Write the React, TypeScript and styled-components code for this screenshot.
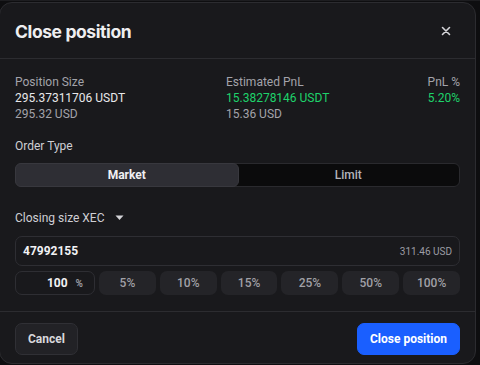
import React from "react";
import styled, { createGlobalStyle } from "styled-components";

const Global = createGlobalStyle`
  html, body { margin: 0; padding: 0; background: #0e0e10; }
  body { font-family: Roboto, "Liberation Sans", sans-serif; width: 480px; height: 365px; overflow: hidden; }
  * { box-sizing: border-box; }
`;

const Backdrop = styled.div`
  width: 480px;
  height: 365px;
  padding-top: 2px;
  background: #0e0e10;
  border-top: 1px solid #1d1d20;
`;

const Modal = styled.div`
  width: 477px;
  height: 362px;
  margin-left: -1px;
  margin-top: -1px;
  background: #19191c;
  border: 1px solid #2c2c30;
  border-radius: 13px;
  display: flex;
  flex-direction: column;
  overflow: hidden;
`;

const Header = styled.div`
  height: 56px;
  flex: none;
  padding: 1px 15px 0 15px;
  display: flex;
  align-items: center;
  justify-content: space-between;
  border-bottom: 1px solid #2c2c30;
`;

const Title = styled.h1`
  margin: 0;
  font-family: Inter, "Liberation Sans", sans-serif;
  font-weight: 700;
  font-size: 17.5px;
  letter-spacing: -0.4px;
  color: #eeeef0;
`;

const CloseBtn = styled.button`
  background: none;
  border: none;
  padding: 0;
  margin-right: 8px;
  width: 12px;
  height: 12px;
  display: flex;
  align-items: center;
  justify-content: center;
`;

const Body = styled.div`
  flex: 1;
  padding: 15px 15px 15px 15px;
  display: flex;
  flex-direction: column;
  border-bottom: 1px solid #2c2c30;
`;

const Stats = styled.div`
  display: grid;
  grid-template-columns: 211px 1fr auto;
`;

const Stat = styled.div<{ $align?: string }>`
  display: flex;
  flex-direction: column;
  align-items: ${(p) => (p.$align === "right" ? "flex-end" : "flex-start")};
`;

const Label = styled.div`
  font-size: 12px;
  line-height: 16px;
  color: #a3a3aa;
`;

const Value = styled.div<{ $tone?: string }>`
  font-size: 12px;
  line-height: 16px;
  font-weight: 400;
  color: ${(p) => (p.$tone === "green" ? "#1ed36b" : "#e8e8ea")};
`;

const Sub = styled.div`
  font-size: 12px;
  line-height: 16px;
  color: #a3a3aa;
`;

const SectionLabel = styled.div<{ $mt: number }>`
  margin-top: ${(p) => p.$mt}px;
  font-size: 12px;
  line-height: 16px;
  color: #cfcfd4;
  display: flex;
  align-items: center;
  gap: 10px;
`;

const Segmented = styled.div`
  margin-top: 9px;
  height: 24px;
  display: grid;
  grid-template-columns: 1fr 1fr;
  background: #0b0b0c;
  border: 1px solid #2a2a2e;
  border-radius: 6px;
`;

const Seg = styled.div<{ $active?: boolean }>`
  display: flex;
  align-items: center;
  justify-content: center;
  margin: -1px;
  border-radius: 6px;
  font-size: 12px;
  font-weight: ${(p) => (p.$active ? 700 : 500)};
  color: ${(p) => (p.$active ? "#f0f0f2" : "#b4b4ba")};
  background: ${(p) => (p.$active ? "#2e2e34" : "transparent")};
  border: 1px solid ${(p) => (p.$active ? "#38383e" : "transparent")};
`;

const AmountBox = styled.div`
  margin-top: 10px;
  height: 30px;
  border: 1px solid #2e2e33;
  border-radius: 7px;
  background: #19191c;
  display: flex;
  align-items: center;
  justify-content: space-between;
  padding: 0 7px 0 7px;
`;

const Amount = styled.span`
  font-size: 12px;
  font-weight: 700;
  color: #f2f2f4;
`;

const AmountUsd = styled.span`
  font-size: 10px;
  color: #9d9da4;
`;

const PctRow = styled.div`
  margin-top: 5px;
  height: 24px;
  display: grid;
  grid-template-columns: 80px repeat(6, 1fr);
  gap: 4px;
`;

const PctInput = styled.div`
  border: 1px solid #2e2e33;
  border-radius: 7px;
  display: flex;
  align-items: center;
  justify-content: flex-end;
  padding-right: 11px;
  gap: 8px;
`;

const PctValue = styled.span`
  font-size: 12px;
  font-weight: 700;
  color: #f2f2f4;
`;

const PctSign = styled.span`
  font-size: 10px;
  font-weight: 700;
  color: #9a9aa0;
`;

const Chip = styled.button`
  border: none;
  border-radius: 7px;
  background: #242428;
  color: #a0a0a6;
  font-family: Roboto, "Liberation Sans", sans-serif;
  font-size: 12px;
  font-weight: 500;
  padding: 0;
`;

const Footer = styled.div`
  flex: none;
  padding: 11px 15px 8px 15px;
  display: flex;
  justify-content: space-between;
`;

const Btn = styled.button<{ $primary?: boolean }>`
  height: 32px;
  padding: 0 ${(p) => (p.$primary ? "12px" : "12px")};
  border-radius: 7px;
  font-family: Roboto, "Liberation Sans", sans-serif;
  font-size: 12px;
  font-weight: 700;
  color: ${(p) => (p.$primary ? "#ffffff" : "#d8d8dc")};
  background: ${(p) => (p.$primary ? "#1a5fff" : "#222226")};
  border: 1px solid ${(p) => (p.$primary ? "#1a5fff" : "#303035")};
`;

const pcts = ["5%", "10%", "15%", "25%", "50%", "100%"];

export default function App() {
  return (
    <>
      <Global />
      <Backdrop>
        <Modal>
          <Header>
            <Title>Close position</Title>
            <CloseBtn aria-label="close">
              <svg width="10" height="10" viewBox="0 0 10 10">
                <path d="M1.5 1.5 L8.5 8.5 M8.5 1.5 L1.5 8.5" stroke="#d4d4d8" strokeWidth="1.6" strokeLinecap="round" />
              </svg>
            </CloseBtn>
          </Header>
          <Body>
            <Stats>
              <Stat>
                <Label>Position Size</Label>
                <Value>295.37311706 USDT</Value>
                <Sub>295.32 USD</Sub>
              </Stat>
              <Stat>
                <Label>Estimated PnL</Label>
                <Value $tone="green">15.38278146 USDT</Value>
                <Sub>15.36 USD</Sub>
              </Stat>
              <Stat $align="right">
                <Label>PnL %</Label>
                <Value $tone="green">5.20%</Value>
              </Stat>
            </Stats>
            <SectionLabel $mt={16}>Order Type</SectionLabel>
            <Segmented>
              <Seg $active>Market</Seg>
              <Seg>Limit</Seg>
            </Segmented>
            <SectionLabel $mt={23}>
              Closing size XEC
              <svg width="9" height="6" viewBox="0 0 9 6">
                <path d="M0.5 0.5 H8.5 L4.5 5 Z" fill="#d4d4d8" />
              </svg>
            </SectionLabel>
            <AmountBox>
              <Amount>47992155</Amount>
              <AmountUsd>311.46 USD</AmountUsd>
            </AmountBox>
            <PctRow>
              <PctInput>
                <PctValue>100</PctValue>
                <PctSign>%</PctSign>
              </PctInput>
              {pcts.map((p) => (
                <Chip key={p}>{p}</Chip>
              ))}
            </PctRow>
          </Body>
          <Footer>
            <Btn>Cancel</Btn>
            <Btn $primary>Close position</Btn>
          </Footer>
        </Modal>
      </Backdrop>
    </>
  );
}
